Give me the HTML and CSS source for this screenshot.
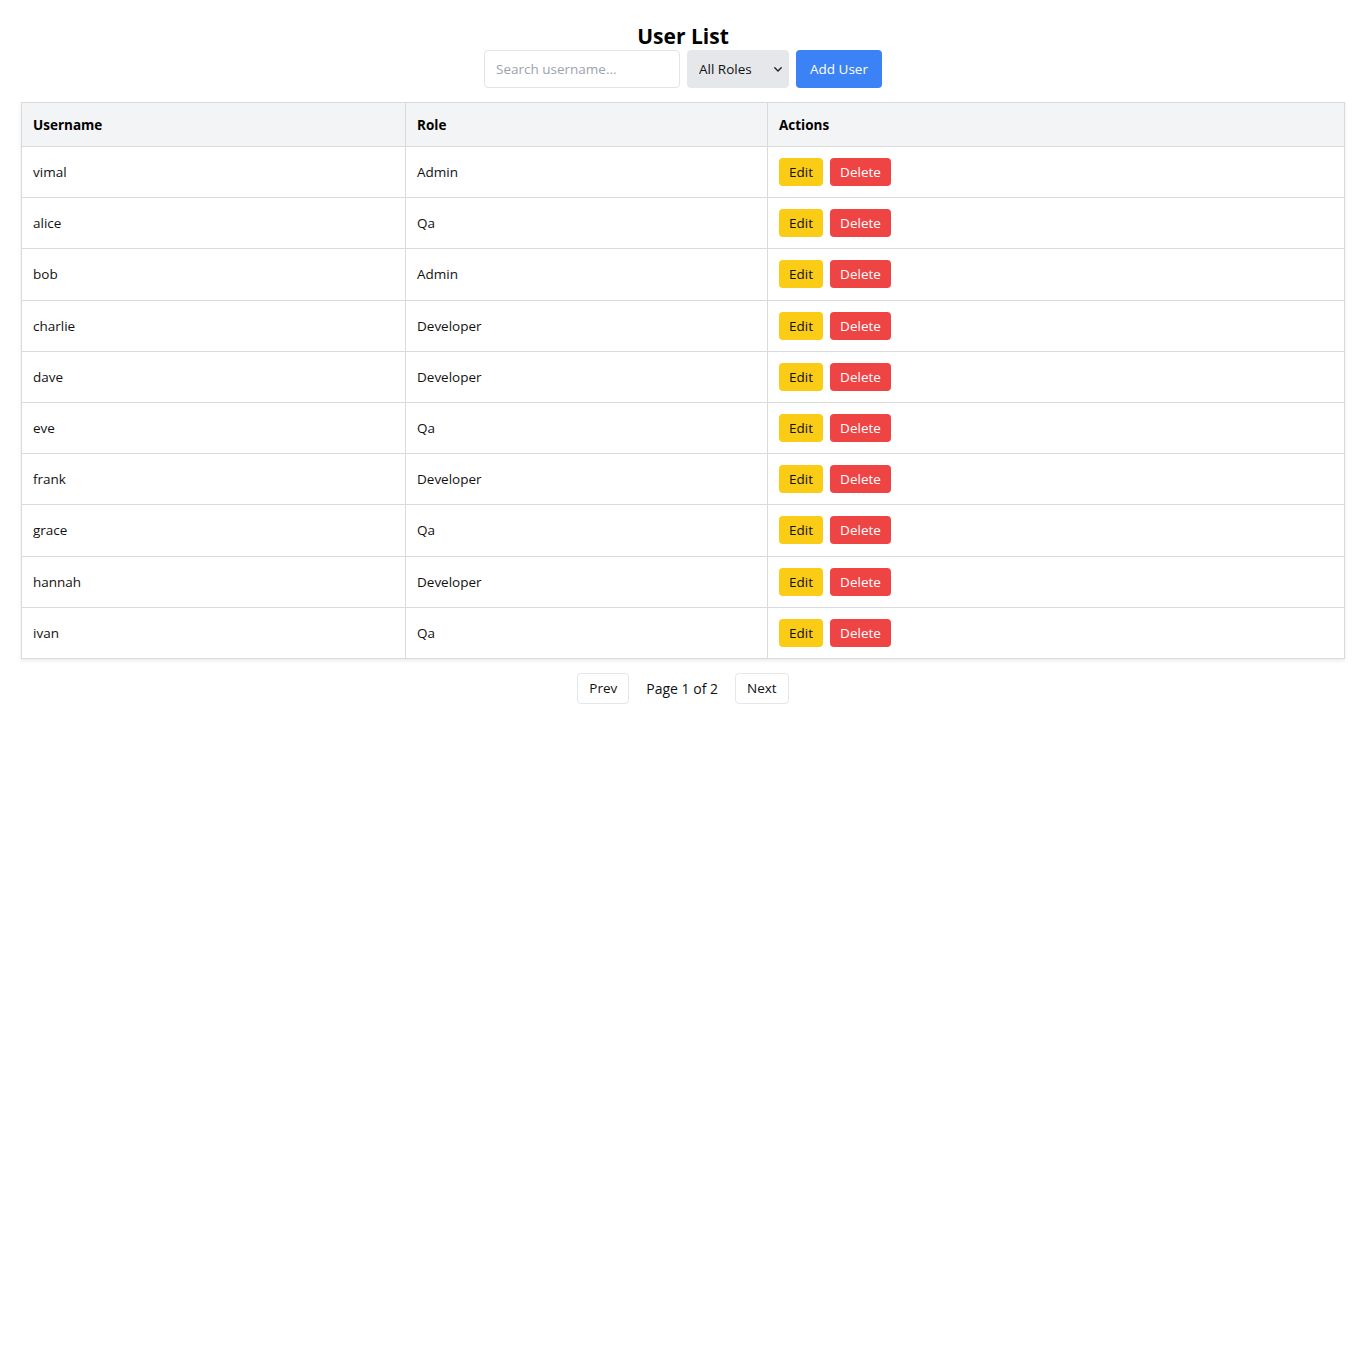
FILE: index.html
```html
<!DOCTYPE html>
<html lang="en">
<head>
<meta charset="utf-8">
<title>User List</title>
<link rel="stylesheet" href="styles.css">
</head>
<body>
<div class="page">
  <h2 class="title">User List</h2>
  <div class="toolbar">
    <input class="search" type="text" placeholder="Search username...">
    <div class="select-wrap">
      <select class="role-select">
        <option>All Roles</option>
        <option>Admin</option>
        <option>Developer</option>
        <option>Qa</option>
      </select>
      <svg class="chevron" width="8" height="5" viewBox="0 0 8 5" aria-hidden="true"><path d="M0.8 0.8 L4 4 L7.2 0.8" fill="none" stroke="#222" stroke-width="1.4" stroke-linecap="round" stroke-linejoin="round"/></svg>
    </div>
    <button class="btn btn-primary">Add User</button>
  </div>
  <table class="users">
    <colgroup>
      <col class="col-user">
      <col class="col-role">
      <col>
    </colgroup>
    <thead>
      <tr><th>Username</th><th>Role</th><th>Actions</th></tr>
    </thead>
    <tbody>
      <tr><td>vimal</td><td>Admin</td><td><div class="actions"><button class="btn btn-edit">Edit</button><button class="btn btn-delete">Delete</button></div></td></tr>
      <tr><td>alice</td><td>Qa</td><td><div class="actions"><button class="btn btn-edit">Edit</button><button class="btn btn-delete">Delete</button></div></td></tr>
      <tr><td>bob</td><td>Admin</td><td><div class="actions"><button class="btn btn-edit">Edit</button><button class="btn btn-delete">Delete</button></div></td></tr>
      <tr><td>charlie</td><td>Developer</td><td><div class="actions"><button class="btn btn-edit">Edit</button><button class="btn btn-delete">Delete</button></div></td></tr>
      <tr><td>dave</td><td>Developer</td><td><div class="actions"><button class="btn btn-edit">Edit</button><button class="btn btn-delete">Delete</button></div></td></tr>
      <tr><td>eve</td><td>Qa</td><td><div class="actions"><button class="btn btn-edit">Edit</button><button class="btn btn-delete">Delete</button></div></td></tr>
      <tr><td>frank</td><td>Developer</td><td><div class="actions"><button class="btn btn-edit">Edit</button><button class="btn btn-delete">Delete</button></div></td></tr>
      <tr><td>grace</td><td>Qa</td><td><div class="actions"><button class="btn btn-edit">Edit</button><button class="btn btn-delete">Delete</button></div></td></tr>
      <tr><td>hannah</td><td>Developer</td><td><div class="actions"><button class="btn btn-edit">Edit</button><button class="btn btn-delete">Delete</button></div></td></tr>
      <tr><td>ivan</td><td>Qa</td><td><div class="actions"><button class="btn btn-edit">Edit</button><button class="btn btn-delete">Delete</button></div></td></tr>
    </tbody>
  </table>
  <div class="pager">
    <button class="btn btn-page">Prev</button>
    <span class="page-info">Page 1 of 2</span>
    <button class="btn btn-page">Next</button>
  </div>
</div>
</body>
</html>
```
FILE: styles.css
```css
* { box-sizing: border-box; }
html, body { margin: 0; background: #ffffff; }
body {
  font-family: "Open Sans", "Noto Sans", Arial, sans-serif;
  font-size: 14px;
  color: #111111;
}
.page {
  padding: 23px 21px 20px;
}
.title {
  margin: 0;
  font-size: 21px;
  line-height: 27px;
  font-weight: 700;
  text-align: center;
  color: #000;
}
.toolbar {
  display: flex;
  justify-content: center;
  gap: 7px;
  margin-bottom: 14px;
}
.search {
  width: 196px;
  height: 38px;
  border: 1px solid #e3e4e8;
  border-radius: 4px;
  padding: 0 11px;
  font: inherit;
  font-size: 13.5px;
  color: #111;
  outline: none;
}
.search::placeholder { color: #9ca3af; }
.select-wrap {
  position: relative;
  width: 102px;
  height: 38px;
}
.role-select {
  appearance: none;
  -webkit-appearance: none;
  width: 100%;
  height: 100%;
  border: 1px solid #e5e7eb;
  border-radius: 4px;
  background: #e5e7eb;
  padding: 0 20px 0 11px;
  font: inherit;
  font-size: 13.5px;
  color: #111;
}
.chevron {
  position: absolute;
  right: 7px;
  top: 17px;
  pointer-events: none;
}
.btn {
  font: inherit;
  font-size: 13.5px;
  border: none;
  border-radius: 4px;
  cursor: pointer;
  line-height: 20px;
}
.btn-primary {
  height: 38px;
  width: 86px;
  background: #3b82f6;
  color: #fff;
}
.users {
  width: 100%;
  border-collapse: collapse;
  table-layout: fixed;
  border: 1px solid #dadada;
  box-shadow: 0 2px 4px rgba(0, 0, 0, 0.08);
}
.col-user { width: 384px; }
.col-role { width: 362px; }
.users th, .users td {
  border: 1px solid #dadada;
  text-align: left;
  padding: 11.1px 11px;
  font-size: 13.5px;
  line-height: 20px;
}
.users th {
  background: #f3f4f6;
  font-weight: 700;
  padding: 12px 11px 11px;
  color: #000;
}
.actions {
  display: flex;
  gap: 7px;
}
.btn-edit {
  height: 28px;
  width: 44px;
  padding: 0;
  background: #facc15;
  color: #111;
}
.btn-delete {
  height: 28px;
  width: 61px;
  padding: 0;
  background: #ef4444;
  color: #fff;
}
.pager {
  display: flex;
  justify-content: center;
  align-items: center;
  margin-top: 14px;
}
.btn-page {
  height: 31px;
  padding: 0 11px;
  background: #fff;
  border: 1px solid #e5e7eb;
  color: #111;
}
.page-info {
  margin: 0 17px;
  color: #111;
}
```
